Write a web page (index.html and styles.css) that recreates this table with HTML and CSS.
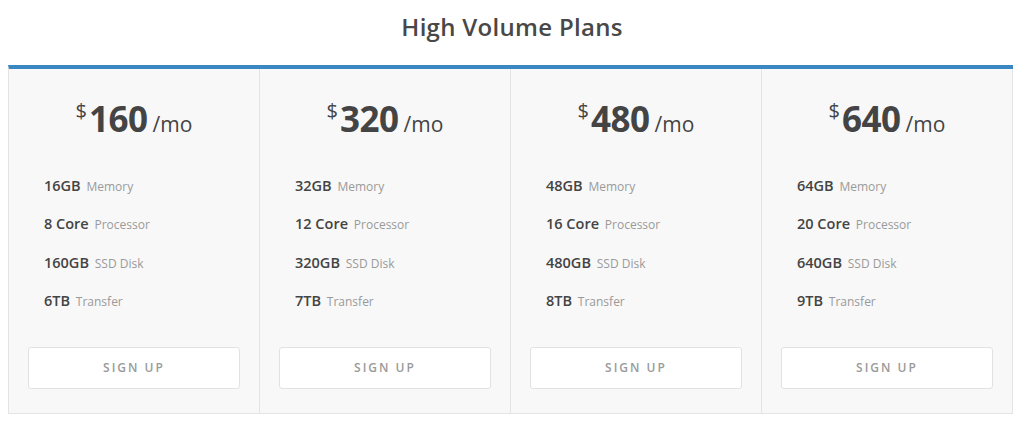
FILE: index.html
```html
<!DOCTYPE html>
<html>
<head>
<meta charset="utf-8">
<link rel="stylesheet" href="styles.css">
</head>
<body>
<h2 class="title">High Volume Plans</h2>
<div class="plans">
  <div class="plan">
    <div class="price"><span class="cur">$</span><span class="amt">160</span><span class="per">/mo</span></div>
    <ul class="specs">
      <li><b>16GB</b> <span>Memory</span></li>
      <li><b>8 Core</b> <span>Processor</span></li>
      <li><b>160GB</b> <span>SSD Disk</span></li>
      <li><b>6TB</b> <span>Transfer</span></li>
    </ul>
    <a class="btn">SIGN UP</a>
  </div>
  <div class="plan">
    <div class="price"><span class="cur">$</span><span class="amt">320</span><span class="per">/mo</span></div>
    <ul class="specs">
      <li><b>32GB</b> <span>Memory</span></li>
      <li><b>12 Core</b> <span>Processor</span></li>
      <li><b>320GB</b> <span>SSD Disk</span></li>
      <li><b>7TB</b> <span>Transfer</span></li>
    </ul>
    <a class="btn">SIGN UP</a>
  </div>
  <div class="plan">
    <div class="price"><span class="cur">$</span><span class="amt">480</span><span class="per">/mo</span></div>
    <ul class="specs">
      <li><b>48GB</b> <span>Memory</span></li>
      <li><b>16 Core</b> <span>Processor</span></li>
      <li><b>480GB</b> <span>SSD Disk</span></li>
      <li><b>8TB</b> <span>Transfer</span></li>
    </ul>
    <a class="btn">SIGN UP</a>
  </div>
  <div class="plan">
    <div class="price"><span class="cur">$</span><span class="amt">640</span><span class="per">/mo</span></div>
    <ul class="specs">
      <li><b>64GB</b> <span>Memory</span></li>
      <li><b>20 Core</b> <span>Processor</span></li>
      <li><b>640GB</b> <span>SSD Disk</span></li>
      <li><b>9TB</b> <span>Transfer</span></li>
    </ul>
    <a class="btn">SIGN UP</a>
  </div>
</div>
</body>
</html>
```
FILE: styles.css
```css
html, body { background: #fff; }
body {
  margin: 0 8px;
  font-family: "Open Sans", "Liberation Sans", sans-serif;
  color: #444;
}
.title {
  margin: 0;
  padding-top: 12px;
  height: 53px;
  box-sizing: border-box;
  text-align: center;
  font-size: 24px;
  font-weight: 600;
  color: #484848;
  line-height: 30px;
  letter-spacing: 0.3px;
}
.plans {
  width: 1005px;
  display: grid;
  grid-template-columns: repeat(4, 1fr);
  border-top: 4px solid #3a88c1;
  border-left: 1px solid #e4e4e4;
  border-bottom: 1px solid #e4e4e4;
  margin-top: 12px;
  box-sizing: border-box;
}
.plan {
  background: #f8f8f8;
  border-right: 1px solid #e4e4e4;
  padding: 0 19px 24px 19px;
  display: flex;
  flex-direction: column;
}
.price {
  text-align: center;
  height: 50px;
  padding-top: 26px;
  color: #444;
  white-space: nowrap;
}
.cur {
  font-size: 20px;
  vertical-align: 14px;
  margin-right: 2px;
}
.amt {
  font-size: 35px;
  font-weight: 700;
  letter-spacing: -0.5px;
}
.per {
  font-size: 21px;
  margin-left: 5px;
}
.specs {
  list-style: none;
  margin: 30.5px 0 0 0;
  padding: 0 0 0 16px;
}
.specs li {
  height: 38.5px;
  line-height: 20px;
  font-size: 14.5px;
  color: #444;
}
.specs b { font-weight: 600; }
.specs span {
  font-size: 12px;
  color: #9a9a9a;
  margin-left: 2px;
}
.btn {
  display: block;
  margin-top: 17.5px;
  height: 42px;
  line-height: 40px;
  box-sizing: border-box;
  background: #fff;
  border: 1px solid #e2e2e2;
  border-radius: 3px;
  text-align: center;
  font-size: 12px;
  font-weight: 600;
  letter-spacing: 2px;
  color: #9a9a9a;
}
```
